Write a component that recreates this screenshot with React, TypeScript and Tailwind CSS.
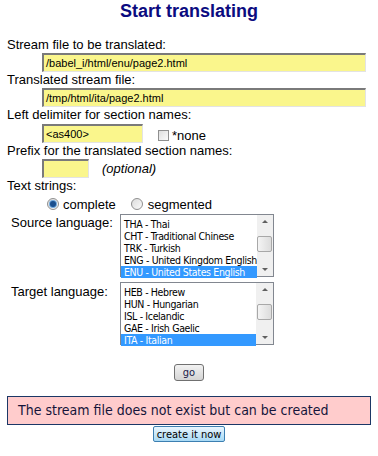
import React from "react"

const sourceLangs = ["THA - Thai", "CHT - Traditional Chinese", "TRK - Turkish", "ENG - United Kingdom English", "ENU - United States English"]
const targetLangs = ["HEB - Hebrew", "HUN - Hungarian", "ISL - Icelandic", "GAE - Irish Gaelic", "ITA - Italian"]

const tahoma = "font-['Tahoma','DejaVu_Sans_Condensed','DejaVu_Sans',sans-serif]"

const TextBox = ({ value, width }: { value: string; width: string }) => (
    <div
        className={`${width} h-[19px] bg-[#faf68c] border-t-2 border-l-2 border-r border-b border-t-[#7a7a7a] border-l-[#7a7a7a] border-r-[#e3e3e3] border-b-[#e3e3e3] pl-[2px] text-[11px] leading-[16px] text-black`}
    >
        {value}
    </div>
)

const ListBox = ({ items }: { items: string[] }) => (
    <div className="flex w-[154px] h-[63px] border border-[#828790] bg-white">
        <ul className={`flex-1 pt-[3px] text-[10.5px] leading-[12px] ${tahoma} tracking-[-0.35px]`}>
            {items.map((item, i) => (
                <li
                    key={item}
                    className={`pl-[3px] h-[12px] whitespace-nowrap ${i === items.length - 1 ? "bg-[#3399ff] text-white" : "text-black"}`}
                >
                    {item}
                </li>
            ))}
        </ul>
        <div className="w-[17px] bg-[#f0f0f0] flex flex-col items-center justify-between py-[5px]">
            <div className="w-0 h-0 border-l-[3px] border-r-[3px] border-b-[3px] border-l-transparent border-r-transparent border-b-[#606060]" />
            <div className="w-[15px] h-[16px] -mt-[4px] rounded-[2px] border border-[#a8a8a8] bg-gradient-to-r from-[#f4f4f4] to-[#dcdcdc]" />
            <div className="w-0 h-0 border-l-[3px] border-r-[3px] border-t-[3px] border-l-transparent border-r-transparent border-t-[#606060]" />
        </div>
    </div>
)

const Radio = ({ checked }: { checked?: boolean }) => (
    <span className="flex items-center justify-center w-[12px] h-[12px] rounded-full border border-[#8f8f8f] bg-gradient-to-br from-[#dcdcdc] to-[#fafafa]">
        {checked ? (
            <span className="w-[6px] h-[6px] rounded-full bg-[#1a4f8e] ring-1 ring-[#6fa8dc]" />
        ) : null}
    </span>
)

export default function App() {
    return (
        <div className="w-[378px] h-[456px] bg-white font-['Liberation_Sans',Arial,sans-serif] text-[13px] leading-[15px] text-black px-[7px]">
            <h1 className="text-center text-[18px] leading-[22px] font-bold text-[#0b0b80]">Start translating</h1>

            <div className="mt-[15px]">Stream file to be translated:</div>
            <div className="pl-[35px] mt-px">
                <TextBox value="/babel_i/html/enu/page2.html" width="w-[324px]" />
            </div>

            <div>Translated stream file:</div>
            <div className="pl-[35px] mt-px">
                <TextBox value="/tmp/html/ita/page2.html" width="w-[324px]" />
            </div>

            <div>Left delimiter for section names:</div>
            <div className="pl-[35px] mt-px flex items-center">
                <TextBox value="<as400>" width="w-[101px]" />
                <span className="ml-[15px] mt-[5px] w-[11px] h-[11px] border border-[#8f8f8f] bg-gradient-to-br from-[#dedede] to-[#fafafa]" />
                <span className="ml-[3px] mt-[5px]">*none</span>
            </div>

            <div>Prefix for the translated section names:</div>
            <div className="pl-[35px] mt-px flex items-center">
                <TextBox value="" width="w-[47px]" />
                <span className="ml-[13px] italic">(optional)</span>
            </div>

            <div>Text strings:</div>
            <div className="pl-[40px] mt-[5px] flex items-center h-[12px]">
                <Radio checked />
                <span className="ml-[4px]">complete</span>
                <span className="ml-[15px]"><Radio /></span>
                <span className="ml-[5px]">segmented</span>
            </div>

            <div className="mt-[4px] flex pl-[4px]">
                <div className="w-[109px] pt-[1px]">Source language:</div>
                <ListBox items={sourceLangs} />
            </div>

            <div className="mt-[5px] flex pl-[4px]">
                <div className="w-[109px] pt-[2px]">Target language:</div>
                <ListBox items={targetLangs} />
            </div>

            <div className="flex justify-center mt-[19px]">
                <button className={`w-[30px] h-[17px] rounded-[3px] border border-[#707070] bg-gradient-to-b from-[#f2f2f2] to-[#d4d4d4] text-[11px] leading-[13px] text-[#1a1a4a] ${tahoma}`}>
                    go
                </button>
            </div>

            <div className={`mt-[15px] h-[29px] border border-[#1b3766] bg-[#ffcccc] pl-[10px] text-[14px] leading-[27px] text-[#15153a] ${tahoma}`}>
                The stream file does not exist but can be created
            </div>

            <div className="flex justify-center mt-px">
                <button className={`w-[72px] h-[16px] rounded-[2px] border border-[#3c7fb1] bg-gradient-to-b from-[#eaf6fd] to-[#a7d9f5] text-[11px] leading-[13px] text-black ${tahoma}`}>
                    create it now
                </button>
            </div>
        </div>
    )
}
